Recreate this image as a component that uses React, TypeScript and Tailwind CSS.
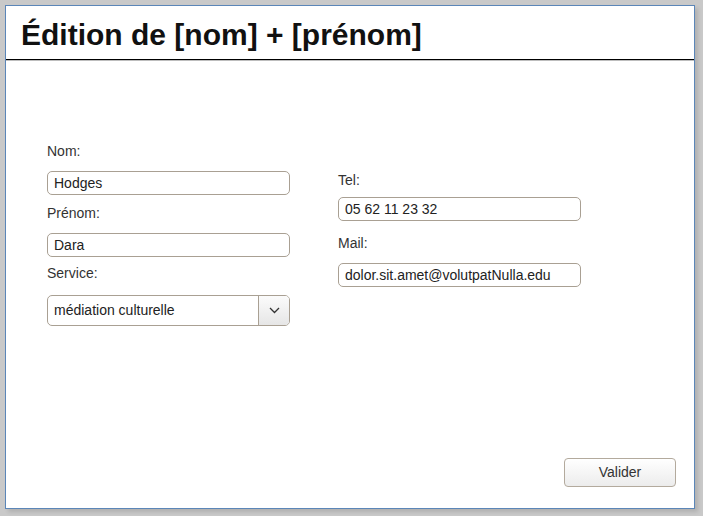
import React from 'react';

function Field({ label, value, labelClass, inputClass }: { label: string; value: string; labelClass: string; inputClass: string }) {
  return (
    <>
      <label className={`block h-4 text-[14px] leading-4 text-[#333] ${labelClass}`}>{label}</label>
      <input
        readOnly
        value={value}
        className={`block w-[243px] h-6 px-[6px] rounded-[5px] border border-[#a9a093] bg-white text-[14px] text-[#222] outline-none ${inputClass}`}
      />
    </>
  );
}

export default function App() {
  return (
    <div className="w-[703px] h-[516px] bg-[#c9c9c9] pt-[5px] pl-[5px] font-['Liberation_Sans',Arial,sans-serif]">
      <div className="w-[690px] h-[504px] bg-white border border-[#5b86b8] shadow-[3px_3px_4px_rgba(0,0,0,0.12)] flex flex-col">
        <header className="h-[54px] shrink-0 border-b border-black shadow-[0_1px_0_#bdbdbd] flex items-center pl-[15px]">
          <h1 className="text-[30px] font-bold text-[#111] leading-none mt-[4px]">Édition de [nom] + [prénom]</h1>
        </header>

        <div className="flex-1 relative">
          <div className="flex gap-[48px] pl-[41px] pt-[83px]">
            <div className="flex flex-col">
              <Field label="Nom:" value="Hodges" labelClass="" inputClass="mt-3" />
              <Field label="Prénom:" value="Dara" labelClass="mt-[10px]" inputClass="mt-3" />
              <label className="block h-4 mt-2 text-[14px] leading-4 text-[#333]">Service:</label>
              <div className="mt-[14px] w-[243px] h-[31px] rounded-[5px] border border-[#a9a093] flex overflow-hidden">
                <span className="flex-1 flex items-center px-[6px] text-[14px] text-[#222]">médiation culturelle</span>
                <span className="w-[31px] border-l border-[#a9a093] bg-gradient-to-b from-[#fbfbfb] to-[#e6e6e6] flex items-center justify-center">
                  <svg width="11" height="7" viewBox="0 0 11 7" fill="none">
                    <path d="M1 1l4.5 4.5L10 1" stroke="#333" strokeWidth="1.3" />
                  </svg>
                </span>
              </div>
            </div>
            <div className="flex flex-col pt-[29px]">
              <Field label="Tel:" value="05 62 11 23 32" labelClass="" inputClass="mt-[9px]" />
              <Field label="Mail:" value="dolor.sit.amet@volutpatNulla.edu" labelClass="mt-[14px]" inputClass="mt-3" />
            </div>
          </div>

          <div className="absolute right-[18px] bottom-[21px]">
            <button className="w-[112px] h-[29px] rounded-[4px] border border-[#b3aa9d] bg-gradient-to-b from-white to-[#ececec] text-[14px] text-[#333]">
              Valider
            </button>
          </div>
        </div>
      </div>
    </div>
  );
}
